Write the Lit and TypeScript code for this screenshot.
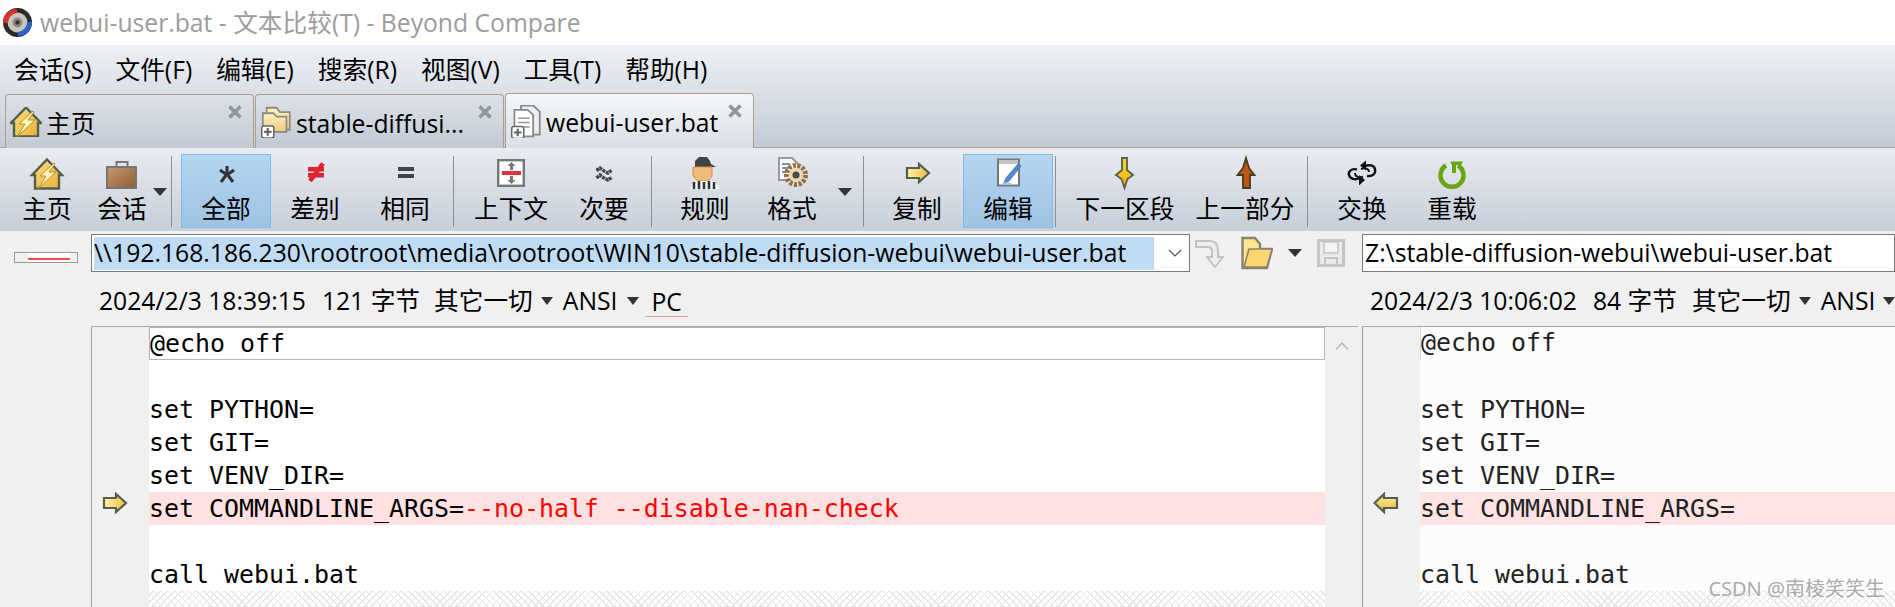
import { LitElement, html, css, svg } from "lit";
import { customElement } from "lit/decorators.js";

const O = "#55604a";
const home = svg`<path d="M20 4.5 L35 20 L32 20 L32 33.5 L8 33.5 L8 20 L5 20 Z" fill="url(#gh)" stroke="${O}" stroke-width="2.4"/><path d="M27 8 L13 21 L19 21 L11 34 L29 17 L22 17 L28 9 Z" fill="#fff4b8" stroke="#b88f28" stroke-width="1"/>`;
const caseI = svg`<rect x="14.5" y="7" width="11" height="6" fill="none" stroke="#777" stroke-width="2"/><rect x="5" y="12" width="29" height="21" fill="url(#gb)" stroke="#777" stroke-width="2"/>`;
const star = svg`<path d="M21 11 V20 M14 15 L21 20 L28 15 M15 27 L21 19 L27 27" fill="none" stroke="#333" stroke-width="3"/>`;
const neq = svg`<path d="M13 12 H29 V16.5 H13 Z M13 18 H29 V22.5 H13 Z" fill="#dd2230"/><path d="M28 8.5 L15 26" stroke="#dd2230" stroke-width="4.5"/>`;
const eq = svg`<rect x="13" y="12" width="16" height="4" fill="#444"/><rect x="13" y="19" width="16" height="4" fill="#444"/>`;
const ctx = svg`<rect x="7.2" y="5.2" width="25.6" height="25.6" fill="#fff" stroke="#777" stroke-width="2.4"/><rect x="11" y="16" width="19" height="4" fill="#e23038"/><path d="M20.5 7 L16.5 11 H19 V15 H22 V11 H24.5 Z M20.5 29 L16.5 25 H19 V21 H22 V25 H24.5 Z" fill="#777"/>`;
const minor = svg`<path d="M12.5 15.5 L16 13 L20 16 L24 18 L28 15 M12.5 23 L16 20 L20 23 L24 25 L28 22" fill="none" stroke="#444" stroke-width="3.4" stroke-dasharray="3 .8"/>`;
const rules = svg`<path d="M10 12 V6 L14 2 H22 L25 6 L26 9 L31 12 Z" fill="#444"/><path d="M8 12 H27 V21 L23 26 H13 L8 21 Z" fill="#ecbc78" stroke="#d98c48" stroke-width="1"/><path d="M5 34 L10 26 H29 L35 34 Z" fill="#fff"/><path d="M9 34 V27 M14 34 V26 M19 34 V27 M24 34 V26 M29 34 V27" stroke="#333" stroke-width="2.6"/>`;
const fmt = svg`<path d="M7 3 H20 L26 9 V25 H7 Z" fill="#fff" stroke="#999" stroke-width="2"/><path d="M10 9 H18 M10 13 H17 M10 17 H15" stroke="#7a94bc" stroke-width="2"/><circle cx="24" cy="20" r="9.5" fill="none" stroke="#9a6f3c" stroke-width="5" stroke-dasharray="3 1.6"/><circle cx="24" cy="20" r="7" fill="#e8d8b8"/><circle cx="24" cy="20" r="3.6" fill="#4c4c4c"/>`;
const arrowR = svg`<path d="M10 13 H22 V9 L32 18 L22 27 V23 H10 Z" fill="url(#ga)" stroke="${O}" stroke-width="2.2"/>`;
const edit = svg`<rect x="10" y="4.5" width="21" height="26" fill="#fff" stroke="#777" stroke-width="2"/><path d="M11 5 H30 V9 H11 Z" fill="#c4c4c4"/><path d="M33 11 L30 9 L18 23 L16 28 L21 26 Z" fill="#5588c8" stroke="#4a78b8" stroke-width="1"/><path d="M11 30 L18 27 L28 30 Z" fill="#a9c2e0"/>`;
const nextI = svg`<path d="M17 3 H22 V15 L28 20 L22.5 24 L19.5 33 L16.5 24 L11 20 L17 15 Z" fill="url(#gd)" stroke="${O}" stroke-width="1.8"/>`;
const prevI = svg`<path d="M21 3 L24 13 L29.5 20 L25 20 V33 H18 V20 L12.5 20 L18 13 Z" fill="#b85a12" stroke="#4a3a20" stroke-width="1.8"/>`;
const swap = svg`<path d="M15 14.5 C9 13 6 17 7 20 C8 24 13 25 17 23.5 M25 21 C31 22 34 18 33 14 C32 10 27 9.5 23 11" fill="none" stroke="#111" stroke-width="2.4"/><path d="M24 5.5 L18 10.5 L24 15.5 Z M17 30.5 L23 25 L17 20 Z" fill="#111"/><path d="M19 14 C23 12 27 14 27 17 M21 21.5 C17 24 13 21 13 18" fill="none" stroke="#111" stroke-width="2"/>`;
const reload = svg`<path d="M14 10.5 A11.5 11.5 0 1 0 26 10.5" fill="none" stroke="#6aa512" stroke-width="4.6"/><path d="M18 6.5 H31 L29 10 H24 V18 H20 V10 Z" fill="#6aa512"/>`;
const plus = svg`<rect x="1.5" y="20.5" width="11" height="11" rx="2" fill="#fff" stroke="#666" stroke-width="1.4"/><path d="M7 22.5 V29.5 M3.5 26 H10.5" stroke="#666" stroke-width="2"/>`;
const folderPlus = svg`<path d="M6 4 H15 L18 8 H27 V24 H6 Z" fill="url(#gf)" stroke="#8c8c80" stroke-width="1.6"/><path d="M2.5 9 H12 L15 12 H24 V26 H2.5 Z" fill="url(#gf)" stroke="#8c8c80" stroke-width="1.6"/>${plus}`;
const docPlus = svg`<path d="M10 1.5 H21 L27 7 V28 H10 Z" fill="#eee" stroke="#888" stroke-width="1.6"/><path d="M4 5.5 H16 L21 10 V29.5 H4 Z" fill="#fff" stroke="#888" stroke-width="1.6"/><path d="M7 13 H18 M7 17 H18 M7 21 H18" stroke="#999" stroke-width="1.4"/>${plus}`;
const closeX = html`<svg class="x" width="14" height="14" viewBox="0 0 14 14"><path d="M1.5 1.5 L12.5 12.5 M12.5 1.5 L1.5 12.5" stroke="#8f969e" stroke-width="3.6"/></svg>`;
const tri = html`<span class="tri"></span>`;

type Tool = { k: "b" | "s" | "d"; t?: string; w?: number; ml?: number; i?: unknown; on?: boolean };
const tools: Tool[] = [
  { k: "b", t: "主页", w: 74, i: home },
  { k: "b", t: "会话", w: 76, i: caseI },
  { k: "d", ml: -7 },
  { k: "s", ml: 4 },
  { k: "b", t: "全部", w: 90, ml: 9, i: star, on: true },
  { k: "b", t: "差别", w: 88, i: neq },
  { k: "b", t: "相同", w: 92, i: eq },
  { k: "s", ml: 2 },
  { k: "b", t: "上下文", w: 114, i: ctx },
  { k: "b", t: "次要", w: 72, i: minor },
  { k: "s", ml: 11 },
  { k: "b", t: "规则", w: 106, i: rules },
  { k: "b", t: "格式", w: 68, i: fmt },
  { k: "d", ml: 12 },
  { k: "s", ml: 11 },
  { k: "b", t: "复制", w: 92, ml: 7, i: arrowR },
  { k: "b", t: "编辑", w: 90, i: edit, on: true },
  { k: "s", ml: 2 },
  { k: "b", t: "下一区段", w: 138, i: nextI },
  { k: "b", t: "上一部分", w: 102, i: prevI },
  { k: "s", ml: 11 },
  { k: "b", t: "交换", w: 108, i: swap },
  { k: "b", t: "重载", w: 72, i: reload },
];
const menus = ["会话(S)", "文件(F)", "编辑(E)", "搜索(R)", "视图(V)", "工具(T)", "帮助(H)"];

@customElement("app-root")
export class AppRoot extends LitElement {
  static styles = css`
    :host { display: block; width: 1895px; height: 607px; overflow: hidden; position: relative; background: #f0f0f0;
      font-family: "Open Sans", "Noto Sans CJK SC", sans-serif; font-size: 24.7px; color: #000; }
    .defs { display: block; width: 0; height: 0; }
    .title { height: 45px; background: #fff; display: flex; align-items: center; padding-left: 2px; color: #9c9c9c; gap: 7px; line-height: 47px; }
    .chrome { height: 103px; background: linear-gradient(#eef1f5, #c4cbd6); display: flex; flex-direction: column; }
    .menu { height: 49px; display: flex; align-items: center; padding: 0 0 0 14px; gap: 24px; line-height: 49px; }
    .tabs { height: 54px; display: flex; padding-left: 5px; gap: 1px; box-sizing: border-box; border-bottom: 1px solid #ad9f88; }
    .tab { width: 249px; height: 54px; box-sizing: border-box; border: 1px solid #ad9f88; border-bottom: none; border-radius: 4px 4px 0 0; display: flex; align-items: center;
      background: linear-gradient(#dde2e9, #c3c9d3); padding-left: 4px; gap: 4px; line-height: 44px; }
    .tab span { padding-top: 4px; }
    .tab.p { padding-left: 5px; gap: 5px; }
    .tab.on { background: linear-gradient(#f4f6f8, #dadfe6); height: 55px; z-index: 1; margin-top: -1px; }
    .tab .x { margin-left: auto; margin-right: 11px; align-self: flex-start; margin-top: 10px; }
    .tools { height: 83px; box-sizing: border-box; padding: 6px 0 0 10px; display: flex; background: linear-gradient(#e9ecf1, #c7ced8); }
    .btn { height: 74px; box-sizing: border-box; flex: none; display: flex; flex-direction: column; align-items: center; border: 1px solid transparent; }
    .btn.on { background: linear-gradient(#b5d5f1, #9fc3e4); border-color: #7fbcee; }
    .btn svg { display: block; flex: none; }
    .btn span { line-height: 30px; margin-top: -1px; white-space: nowrap; }
    .sep { width: 1px; height: 71px; margin-top: 2px; background: #8b9096; flex: none; }
    .dd { width: 14px; flex: none; padding-top: 34px; }
    .tri { display: block; width: 0; height: 0; border-left: 6px solid transparent; border-right: 6px solid transparent; border-top: 8px solid #333; flex: none; }
    .dd .tri { border-left-width: 7px; border-right-width: 7px; }
    .row { display: grid; grid-template-columns: 91px 1271px 1fr; }
    .paths { height: 44px; padding-top: 3px; box-sizing: border-box; margin-top: 0; }
    .mini { width: 64px; height: 11px; margin: 18px 0 0 14px; box-sizing: border-box; border: 1px solid #999; background: #f0f0f0; display: flex; padding-left: 13px; }
    .mini i { display: block; width: 42px; height: 9px; background: linear-gradient(#fff 5px, #f44 5px, #f44 7px, #fff 7px); }
    .left { display: flex; align-items: flex-start; }
    .input { box-sizing: border-box; height: 38px; border: 1px solid #7a7a7a; background: #fff; display: flex; align-items: center; padding-left: 2px; line-height: 32px; white-space: nowrap; }
    .input.a { width: 1099px; }
    .sel { width: 1060px; height: 33px; background: #c0dcf5; flex: none; }
    .chev { margin-left: 14px; flex: none; }
    .acts { display: flex; align-items: center; height: 38px; }
    .acts svg { display: block; flex: none; }
    .acts .tri { border-left-width: 7px; border-right-width: 7px; margin-left: 15px; }
    .gap4 { margin-left: 4px; }
    .gap15 { margin-left: 15px; }
    .gap17 { margin-left: 17px; }
    .info { height: 51px; display: flex; align-items: center; padding: 0 0 0 8px; white-space: nowrap; overflow: hidden; line-height: 51px; }
    .info span { flex: none; }
    .m8 { margin-left: 8px; }
    .m10 { margin-left: 10px; }
    .m14 { margin-left: 14px; }
    .m15 { margin-left: 15px; }
    .m16 { margin-left: 16px; }
    .pc { border-bottom: 1px solid #e89a9a; line-height: 28px; padding: 0 6px; margin-left: 6px; margin-top: 3px; }
    .panes { height: 281px; display: grid; grid-template-columns: 91px 1267px 4px 1fr; }
    .pane { display: grid; grid-template-columns: 57px 1fr; border-top: 1px solid #a9a9a9; border-left: 1px solid #a0a0a0; font-family: "DejaVu Sans Mono", monospace; font-size: 24.92px; line-height: 33px; overflow: hidden; }
    .pane.a { grid-template-columns: 57px 1176px 34px; }
    .gut { background: #f0f0f0; display: flex; flex-direction: column; }
    .gut svg { display: block; margin: 165px 0 0 10px; }
    .text { background: #fff; display: flex; flex-direction: column; white-space: pre; height: 281px; }
    .pane.b .text { background: #fcfcfc; color: #222; }
    .ln { height: 33px; flex: none; }
    .ln.box { box-sizing: border-box; border: 1px solid #b5b5b5; line-height: 31px; }
    .pane.b .ln.box { border: none; border-left: 1px solid #ddd; }
    .ln.diff { background: #ffe1e1; }
    .pane.b .ln.diff { background: #fde3e3; }
    .red { color: #f00; }
    .hatch { flex: 1; background-color: #fff; background-image: repeating-linear-gradient(45deg, #e6e6e6 0 1px, transparent 1px 5px), repeating-linear-gradient(-45deg, #e6e6e6 0 1px, transparent 1px 5px); }
    .sb { background: #f0f0f0; display: flex; justify-content: center; padding-top: 15px; }
    .sb svg { display: block; }
    .logo { display: block; flex: none; }
    .mark { position: absolute; right: 10px; top: 575px; font-family: "Noto Sans", "Noto Sans CJK SC", sans-serif; font-size: 20px; line-height: 28px; color: rgba(125,125,125,.65); }
  `;

  renderLogo() {
    return html`<svg class="logo" width="31" height="31" viewBox="0 0 31 31">
      <circle cx="15.5" cy="15.5" r="14.5" fill="#2a2a2a"/><circle cx="15.5" cy="15.5" r="10" fill="#c9c6bd"/><circle cx="15.5" cy="15.5" r="5" fill="#8d8a82"/><circle cx="15.5" cy="15.5" r="2.2" fill="#333"/>
      <path d="M1 16 L6 16 A10 10 0 0 1 15 6 L15 2 A14 14 0 0 0 1 16 Z" fill="#d8332c"/><path d="M30 15 L25 15 A10 10 0 0 1 16 25 L16 29 A14 14 0 0 0 30 15 Z" fill="#2d62c9"/></svg>`;
  }

  renderTool(t: Tool) {
    if (t.k === "s") return html`<div class="sep" style="margin-left:${t.ml}px"></div>`;
    if (t.k === "d") return html`<div class="dd" style="margin-left:${t.ml}px">${tri}</div>`;
    return html`<div class="btn ${t.on ? "on" : ""}" style="width:${t.w}px;margin-left:${t.ml ?? 0}px">
      <svg width="40" height="40" viewBox="0 0 40 40">${t.i}</svg><span>${t.t}</span></div>`;
  }

  renderArrow(flip: boolean) {
    return html`<svg width="26" height="22" viewBox="${flip ? "0 0 26 22" : "8 7 26 22"}">
      ${flip ? svg`<path d="M1.5 11 L11 2 V6 H24 V16 H11 V20 Z" fill="url(#gy)" stroke="${O}" stroke-width="2.2"/>` : arrowR}</svg>`;
  }

  render() {
    return html`
      <svg class="defs" aria-hidden="true"><defs>
        <linearGradient id="gy" x1="0" y1="0" x2="0" y2="1"><stop offset="0" stop-color="#fff09c"/><stop offset="1" stop-color="#e8b840"/></linearGradient>
        <linearGradient id="ga" x1="0" y1="0" x2="1" y2="0"><stop offset="0" stop-color="#fff4a8"/><stop offset="1" stop-color="#f0bc48"/></linearGradient>
        <linearGradient id="gh" x1="0" y1="0" x2="1" y2="1"><stop offset="0" stop-color="#fbe08a"/><stop offset="1" stop-color="#e8ae34"/></linearGradient>
        <linearGradient id="gd" x1="0" y1="0" x2="0" y2="1"><stop offset="0" stop-color="#f2cf50"/><stop offset=".6" stop-color="#ffc010"/><stop offset="1" stop-color="#e09800"/></linearGradient>
        <linearGradient id="gb" x1="0" y1="0" x2="1" y2="1"><stop offset="0" stop-color="#c69a6c"/><stop offset="1" stop-color="#8e5e34"/></linearGradient>
        <linearGradient id="gf" x1="0" y1="0" x2="0" y2="1"><stop offset="0" stop-color="#fff2c4"/><stop offset="1" stop-color="#ecc884"/></linearGradient>
      </defs></svg>
      <div class="title">${this.renderLogo()}<span>webui-user.bat - 文本比较(T) - Beyond Compare</span></div>
      <div class="chrome">
        <div class="menu">${menus.map((m) => html`<span>${m}</span>`)}</div>
        <div class="tabs">
          <div class="tab"><svg width="32" height="30" viewBox="4 4 32 30">${home}</svg><span>主页</span>${closeX}</div>
          <div class="tab p"><svg width="30" height="33" viewBox="1 1.5 27 30">${folderPlus}</svg><span>stable-diffusi...</span>${closeX}</div>
          <div class="tab p on"><svg width="30" height="33" viewBox="1 1 27 30">${docPlus}</svg><span>webui-user.bat</span>${closeX}</div>
        </div>
      </div>
      <div class="tools">${tools.map((t) => this.renderTool(t))}</div>
      <div class="row paths">
        <div><div class="mini"><i></i></div></div>
        <div class="left">
          <div class="input a"><div class="sel"><span>\\\\192.168.186.230\\rootroot\\media\\rootroot\\WIN10\\stable-diffusion-webui\\webui-user.bat</span></div>
            <svg class="chev" width="14" height="8" viewBox="0 0 14 8"><path d="M1 1 L7 7 L13 1" fill="none" stroke="#555" stroke-width="1.2"/></svg></div>
          <div class="acts">
            <svg class="gap4" width="30" height="32" viewBox="0 0 30 32"><path d="M2 4 H16 C22 4 24 8 24 14 V20 H29 L21 30 L13 20 H18 V14 C18 11 17 10 14 10 H2 Z" fill="#eee" stroke="#c2c2c2" stroke-width="2"/></svg>
            <svg class="gap17" width="32" height="34" viewBox="0 0 32 34"><path d="M1.5 32 V2 H14 L19 8 V13 H31 L26 32 Z" fill="#ffe38f" stroke="#8a8270" stroke-width="2.4"/><path d="M8 13 H31 L26 31 H3 Z" fill="#fbd66e" stroke="#8a8270" stroke-width="1.6"/></svg>
            <span class="tri"></span>
            <svg class="gap15" width="28" height="28" viewBox="0 0 28 28"><path d="M1.5 1.5 H26.5 V26.5 H1.5 Z" fill="#eaeaea" stroke="#c4c4c4" stroke-width="3"/><rect x="7" y="3" width="14" height="11" fill="#f4f4f4" stroke="#c4c4c4" stroke-width="1.5"/><rect x="8" y="19" width="12" height="7" fill="none" stroke="#c4c4c4" stroke-width="2"/></svg>
          </div>
        </div>
        <div class="input">Z:\\stable-diffusion-webui\\webui-user.bat</div>
      </div>
      <div class="row">
        <div></div>
        <div class="info"><span>2024/2/3 18:39:15</span><span class="m16">121 字节</span><span class="m14">其它一切</span><span class="m8">${tri}</span><span class="m10">ANSI</span><span class="m10">${tri}</span><span class="pc">PC</span></div>
        <div class="info"><span>2024/2/3 10:06:02</span><span class="m16">84 字节</span><span class="m15">其它一切</span><span class="m8">${tri}</span><span class="m10">ANSI</span><span class="m8">${tri}</span></div>
      </div>
      <div class="panes">
        <div></div>
        <div class="pane a">
          <div class="gut">${this.renderArrow(false)}</div>
          <div class="text">${this.renderLines(html`--no-half --disable-nan-check`)}</div>
          <div class="sb"><svg width="14" height="8" viewBox="0 0 14 8"><path d="M1 7.5 L7 1 L13 7.5" fill="none" stroke="#b8b8b8" stroke-width="1.6"/></svg></div>
        </div>
        <div></div>
        <div class="pane b">
          <div class="gut">${this.renderArrow(true)}</div>
          <div class="text">${this.renderLines(html``)}</div>
        </div>
      </div>
      <div class="mark">CSDN @南棱笑笑生</div>
    `;
  }

  renderLines(extra: unknown) {
    return html`<div class="ln box">@echo off</div><div class="ln"></div><div class="ln">set PYTHON=</div><div class="ln">set GIT=</div><div class="ln">set VENV_DIR=</div>
      <div class="ln diff">set COMMANDLINE_ARGS=<span class="red">${extra}</span></div><div class="ln"></div><div class="ln">call webui.bat</div><div class="hatch"></div>`;
  }
}
